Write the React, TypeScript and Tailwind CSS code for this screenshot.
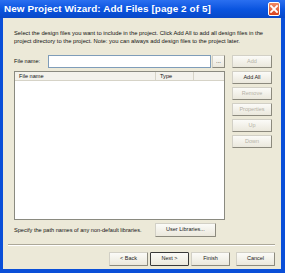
import React from "react";

const font = { fontFamily: '"Liberation Sans", Arial, sans-serif' };

const Btn: React.FC<{ label: string; disabled?: boolean; def?: boolean; className?: string }> = ({
  label,
  disabled,
  def,
  className = "",
}) => (
  <div
    className={
      "flex items-center justify-center h-[13px] text-[5.5px] leading-none rounded-[1px] bg-gradient-to-b from-[#fbfbf8] to-[#ebe8dc] " +
      (def
        ? "border border-[#3a3a3a] "
        : "border border-[#d2d0c6] border-r-[#8c8a7e] border-b-[#8c8a7e] ") +
      (disabled ? "text-[#b5b2a6] " : "text-[#1a1a1a] ") +
      className
    }
  >
    {label}
  </div>
);

export default function App() {
  return (
    <div
      className="w-[285px] h-[273px] flex flex-col bg-[#0a4fd8] overflow-hidden"
      style={font}
    >
      {/* title bar */}
      <div className="h-[18px] flex items-center justify-between pl-[4px] pr-[5px] bg-gradient-to-b from-[#2a6ff0] via-[#0a55e0] to-[#0848c8]">
        <span className="text-white font-bold text-[9.9px] leading-none tracking-[0.1px]">
          New Project Wizard: Add Files [page 2 of 5]
        </span>
        <div className="w-[12px] h-[14px] rounded-[2px] border border-white bg-gradient-to-b from-[#f08a63] to-[#d8401c] flex items-center justify-center">
          <svg width="8" height="8" viewBox="0 0 8 8">
            <path d="M1 1 L7 7 M7 1 L1 7" stroke="white" strokeWidth="1.8" strokeLinecap="square" />
          </svg>
        </div>
      </div>

      {/* body */}
      <div className="flex-1 ml-[3px] mr-[4px] mb-[4px] bg-[#ece9d8] flex flex-col pl-[11px] pr-[5px] pt-[11px] text-[#111]">
        <p className="text-[5.8px] leading-[8px] whitespace-nowrap">
          Select the design files you want to include in the project. Click Add All to add all design files in the
          <br />
          project directory to the project. Note: you can always add design files to the project later.
        </p>

        <div className="flex mt-[10px]">
          {/* left column */}
          <div className="w-[211px] flex flex-col">
            <div className="flex items-center h-[13px]">
              <span className="text-[5.6px] w-[34px]">File name:</span>
              <div className="w-[163px] h-[13px] bg-white border border-[#7f9db9]" />
              <div className="w-[13px] h-[13px] ml-[1px] flex items-center justify-center bg-gradient-to-b from-[#fbfbf8] to-[#ebe8dc] border border-[#d2d0c6] border-r-[#8c8a7e] border-b-[#8c8a7e] text-[6px] leading-none pb-[2px]">
                ...
              </div>
            </div>
            <div className="mt-[3px] h-[149px] bg-white border border-[#8a8a80] flex flex-col">
              <div className="h-[9px] flex text-[5.6px] leading-[9px] bg-[#f3f2ec] border-b border-[#d6d3c7]">
                <div className="w-[141px] pl-[4px] border-r border-[#d6d3c7]">File name</div>
                <div className="w-[38px] pl-[4px] border-r border-[#d6d3c7]">Type</div>
                <div className="flex-1" />
              </div>
            </div>
          </div>

          {/* right buttons */}
          <div className="ml-[7px] w-[40px] flex flex-col gap-[3px]">
            <Btn label="Add" disabled />
            <Btn label="Add All" />
            <Btn label="Remove" disabled />
            <Btn label="Properties" disabled />
            <Btn label="Up" disabled />
            <Btn label="Down" disabled />
          </div>
        </div>

        <div className="flex items-center mt-[3px] h-[14px]">
          <span className="text-[5.6px] w-[141px]">Specify the path names of any non-default libraries.</span>
          <Btn label="User Libraries..." className="w-[61px] h-[14px]" />
        </div>

        <div className="mt-[7px] -ml-[6px] mr-[1px] h-[2px] border-t border-[#aca899] border-b border-b-white" />

        <div className="flex justify-end mt-[6px] pr-[1px] gap-[2px]">
          <Btn label="< Back" className="w-[39px] h-[14px]" />
          <Btn label="Next >" def className="w-[39px] h-[14px]" />
          <Btn label="Finish" className="w-[39px] h-[14px]" />
          <Btn label="Cancel" className="w-[39px] h-[14px] ml-[4px]" />
        </div>
      </div>
    </div>
  );
}
